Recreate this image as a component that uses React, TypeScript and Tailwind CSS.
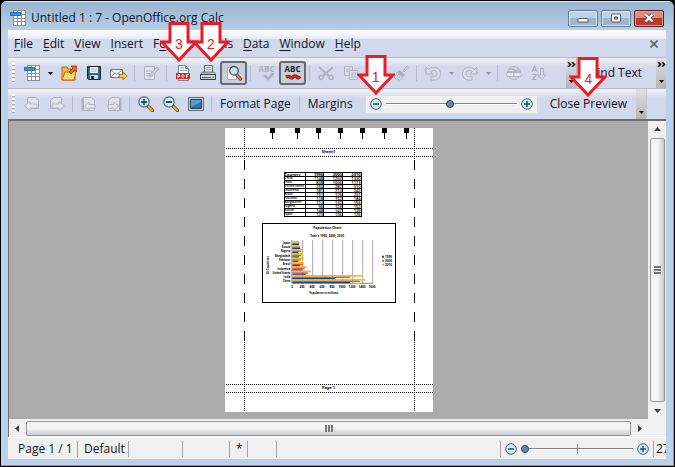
import { useState } from 'react';
import type { ReactNode } from 'react';
import clsx from 'clsx';

const menus = ['File', 'Edit', 'View', 'Insert', 'Format', 'Tools', 'Data', 'Window', 'Help'];

const columnTabs = [47, 72, 93, 115, 137, 159, 181];

const countries = [
  { name: 'China', values: [1148, 1263, 1330] },
  { name: 'India', values: [838, 1006, 1173] },
  { name: 'United States', values: [250, 282, 310] },
  { name: 'Indonesia', values: [181, 213, 242] },
  { name: 'Brazil', values: [151, 176, 201] },
  { name: 'Pakistan', values: [118, 152, 184] },
  { name: 'Bangladesh', values: [112, 132, 156] },
  { name: 'Nigeria', values: [96, 123, 152] },
  { name: 'Russia', values: [148, 147, 139] },
  { name: 'Japan', values: [123, 126, 126] },
];

// bar lengths for 2010, 2000 and 1990, listed from the top of the chart
const bars = [
  { name: 'Japan', y: 55, w: [22, 21, 20] },
  { name: 'Russia', y: 67, w: [23, 23, 24] },
  { name: 'Nigeria', y: 79, w: [33, 27, 17] },
  { name: 'Bangladesh', y: 92, w: [31, 27, 20] },
  { name: 'Pakistan', y: 105, w: [35, 25, 18] },
  { name: 'Brazil', y: 118, w: [35, 32, 23] },
  { name: 'Indonesia', y: 131, w: [43, 37, 29] },
  { name: 'United States', y: 144, w: [56, 47, 40] },
  { name: 'India', y: 157, w: [212, 173, 128] },
  { name: 'China', y: 169, w: [220, 203, 173] },
];

/* ---------- Icons ---------- */

function Icon({ children, className = 'size-4' }: { children: ReactNode; className?: string }) {
  return (
    <svg viewBox="0 0 16 16" className={clsx('shrink-0', className)} fill="none" aria-hidden="true">
      {children}
    </svg>
  );
}

function SheetIcon({ className }: { className?: string }) {
  return (
    <Icon className={className}>
      <path d="M3 0h13v16H3z" fill="#8a9098" />
      <path
        d="M4 1h3v3H4zM8 1h3v3H8zM12 1h3v3h-3zM4 5h3v3H4zM8 5h3v3H8zM12 5h3v3h-3zM4 9h3v2H4zM8 9h3v2H8zM12 9h3v2h-3zM4 12h3v3H4zM8 12h3v3H8zM12 12h3v3h-3z"
        fill="#fff"
      />
      <path d="M.5 2.5h10v3H.5z" fill="#2f9ae0" stroke="#1671b5" />
    </Icon>
  );
}

function OpenIcon() {
  return (
    <Icon>
      <path d="M1 15V2h5l1 2h3v4h4v7z" fill="#f6b93b" stroke="#a9660c" />
      <path d="M1 15l3-8h4l1-1h6l-2 9z" fill="#ffdb6e" stroke="#b5700d" />
      <path d="M8 7l4-4-2-2h6v6l-2-2-4 4z" fill="#ea6a24" stroke="#8f2f0c" strokeWidth=".8" />
    </Icon>
  );
}

function SaveIcon() {
  return (
    <Icon>
      <path d="M1.5 1.5h13v13h-12l-1-1z" fill="#3b6286" stroke="#15273a" />
      <path d="M4 2h8v6H4z" fill="#eef5fb" />
      <path d="M5 4h6M5 6h6" stroke="#a5bccf" />
      <path d="M4 10h8v4H4z" fill="#c9d4de" />
      <path d="M5 11h3v3H5z" fill="#1b2e42" />
    </Icon>
  );
}

function MailIcon() {
  return (
    <Icon className="h-4 w-[18px]">
      <path d="M-.5 4.500h12v8h-12z" fill="#f4f6f9" stroke="#6f7882" />
      <path d="M0 5l5.500 4.500L11 5M0 12l4-4M11 12L7 8" stroke="#929aa3" />
      <path d="M8 9.500h4V7l4 4-4 4v-2.500H8z" fill="#ffc94a" stroke="#a5640a" strokeWidth=".9" />
    </Icon>
  );
}

function EditIcon() {
  return (
    <Icon className="size-4 text-[#adb3c3]">
      <path d="M1.500 1.500h10v13h-10z" fill="#dfe3ef" stroke="currentColor" />
      <path d="M3 6h6M3 8.500h5M3 11h3" stroke="currentColor" />
      <path d="M6 12l1-3 7-7 2 2-7 7z" fill="#c7ccda" stroke="currentColor" />
    </Icon>
  );
}

function PdfIcon() {
  return (
    <Icon>
      <path d="M3.500.5h7l3 3v12h-10z" fill="#f7f9fb" stroke="#77838f" />
      <path d="M10.500.5v3h3" stroke="#77838f" />
      <path d="M5 3h4M5 5.500h7" stroke="#88a6c0" />
      <path d="M1 8h14v6H1z" fill="#e0241b" />
      <path d="M3 13V9.500h1.500v2H3M7 9.500v3h1.200l.8-.8v-1.400l-.8-.8zM11.500 13V9.500H14M11.500 11.200H13" stroke="#fff" strokeWidth=".9" />
    </Icon>
  );
}

function PrinterIcon() {
  return (
    <Icon>
      <path d="M4.500 8V.5h8V8" fill="#fafdff" stroke="#5b6570" />
      <path d="M6 2.500h5M6 4.500h5" stroke="#6d98c0" />
      <path d="M1 8.500l2-1.500h10.500L15 8.500V10H1z" fill="#c3c8cd" stroke="#50575e" />
      <path d="M.5 9.500h15v5H.5z" fill="#d3d7da" stroke="#363c43" />
      <path d="M2 12.500h9" stroke="#50575e" />
      <path d="M12 12.500h2" stroke="#35b81f" strokeWidth="1.500" />
    </Icon>
  );
}

function PreviewIcon() {
  return (
    <Icon>
      <path d="M1.500 2.500h9v12h-9z" fill="#fff" stroke="#a3abb5" />
      <path d="M10.500 9.500l4 4.500" stroke="#5c3a12" strokeWidth="3.200" strokeLinecap="round" />
      <path d="M10.800 9.800l3.500 4" stroke="#e9a13a" strokeWidth="1.600" strokeLinecap="round" />
      <circle cx="8" cy="5.800" r="4.300" fill="#c6e2f5" stroke="#44525f" strokeWidth="1.300" />
      <path d="M5.500 5.500C5.800 4 7 3.300 8.500 3.300" stroke="#fff" />
    </Icon>
  );
}

function SpellIcon({ active }: { active?: boolean }) {
  return (
    <span
      className={clsx(
        'flex flex-col items-center text-[8px] leading-[8px] font-bold',
        active ? 'text-[#18222d]' : 'text-[#a9afbf]'
      )}
    >
      ABC
      <svg viewBox="0 0 16 8" className="h-2 w-4" fill="none" aria-hidden="true">
        {active ? (
          <>
            <path d="M1 4c2-1 3-1 4 0s2 1.500 3 0 3-1.500 4 0 2 1 3-.5" stroke="#7d120b" strokeWidth="3.200" />
            <path d="M1 4c2-1 3-1 4 0s2 1.500 3 0 3-1.500 4 0 2 1 3-.5" stroke="#e8281b" strokeWidth="2" />
          </>
        ) : (
          <path d="M5 2l4 4 6-6" stroke="currentColor" strokeWidth="2.400" />
        )}
      </svg>
    </span>
  );
}

function CutIcon() {
  return (
    <Icon className="size-4 text-[#adb3c3]">
      <path d="M1 2l10 9M15 2L5 11" stroke="currentColor" strokeWidth="2" />
      <circle cx="3" cy="12.500" r="2" stroke="currentColor" strokeWidth="1.600" />
      <circle cx="13" cy="12.500" r="2" stroke="currentColor" strokeWidth="1.600" />
    </Icon>
  );
}

function CopyIcon() {
  return (
    <Icon className="size-4 text-[#adb3c3]">
      <path d="M1.500 1.500h8v9h-8z" fill="#dce0ed" stroke="currentColor" />
      <path d="M6.500 5.500h8v9h-8z" fill="#dce0ed" stroke="currentColor" />
      <path d="M3 4h5M3 6h3M8 8h5M8 10h5M8 12h5" stroke="currentColor" />
    </Icon>
  );
}

function PasteIcon() {
  return (
    <Icon className="size-4 text-[#adb3c3]">
      <path d="M2.500 2.500h11v12h-11z" fill="#dce0ed" stroke="currentColor" />
      <path d="M5 1h6v3H5z" fill="currentColor" />
    </Icon>
  );
}

function BrushIcon() {
  return (
    <Icon className="size-4 text-[#a9afbf]">
      <path d="M10 6l4-5 1.500 1.500L11 7z" fill="#d5dae8" stroke="currentColor" />
      <path d="M6 5l6 5-1.500 2-6-5z" fill="currentColor" />
      <path d="M4 7l6 5c-1 2-3 3-5 3 0-1-1-1-2-1-1-1-1-1-2-2 2-1 2-3 3-5z" fill="#d5dae8" stroke="currentColor" />
      <path d="M4 12l2-3M6 13l1-2" stroke="currentColor" />
    </Icon>
  );
}

function UndoIcon({ flip }: { flip?: boolean }) {
  return (
    <Icon className={clsx('size-4 text-[#a9afbf]', flip && '-scale-x-100')}>
      <path
        d="M1 2v7h7L5.500 6.500C8 4.500 12 5 12 8.500S9 12 6 11.500V15c5 1 9.500-1 9.500-6.500C15.500 2 8 .5 3.500 4.500z"
        fill="#d9deeb"
        stroke="currentColor"
      />
    </Icon>
  );
}

function GlobeIcon() {
  return (
    <Icon className="size-4 text-[#adb3c3]">
      <circle cx="8" cy="8" r="6.500" fill="#cfd4e2" stroke="currentColor" />
      <path d="M3 4c2 1 4-1 5 1s3 0 5-1M2 7h12" stroke="currentColor" strokeWidth="1.300" />
      <rect x=".5" y="7.500" width="8" height="4" rx="2" fill="#e2e6f0" stroke="currentColor" />
      <rect x="7.500" y="7.500" width="8" height="4" rx="2" fill="#e2e6f0" stroke="currentColor" />
    </Icon>
  );
}

function SortIcon() {
  return (
    <Icon className="size-4 text-[#a9afbf]">
      <path d="M1 7l2.500-6L6 7M2 5h3M1.500 9.500h4l-4 5h4" stroke="currentColor" strokeWidth="1.200" />
      <path d="M9.500 3.500h3V10h2.500l-4 4.500L7 10h2.500z" fill="#d5dae8" stroke="currentColor" />
    </Icon>
  );
}

function PageArrowIcon({ flip, edge }: { flip?: boolean; edge?: boolean }) {
  return (
    <Icon className={clsx('size-4 text-[#adb2c2]', flip && '-scale-x-100')}>
      <path d={edge ? 'M2.500 1.500h8l3 3v10h-11z' : 'M3.500 1.500h8l3 3v8h-11z'} fill="#dfe3ef" stroke="currentColor" />
      {edge && <path d="M1.500 2v13" stroke="currentColor" strokeWidth="2" />}
      <path
        d={edge ? 'M3.500 10L8 6v2.500h6v3.500H8v2.500z' : 'M.5 10L6 5.500V8h7v4H6v2.500z'}
        fill="#e5e8f2"
        stroke="currentColor"
      />
    </Icon>
  );
}

function MagnifierIcon({ plus }: { plus?: boolean }) {
  return (
    <Icon>
      <path d="M10.500 10.500l4 4" stroke="#7b4a11" strokeWidth="3.200" strokeLinecap="round" />
      <path d="M10.800 10.800l3.500 3.500" stroke="#f2b23f" strokeWidth="1.800" strokeLinecap="round" />
      <circle cx="6" cy="6" r="5.200" fill="#d5ecfb" stroke="#51626f" strokeWidth="1.200" />
      <path d={plus ? 'M3 6h6M6 3v6' : 'M3 6h6'} stroke="#12548f" strokeWidth="1.800" />
    </Icon>
  );
}

function ScreenIcon() {
  return (
    <Icon>
      <path d="M.5 1.500h15v13H.5z" fill="#d4d6d6" stroke="#62686e" />
      <path d="M2.500 3.500h11v9h-11z" fill="#2f74ad" stroke="#123e66" />
      <path d="M3 4h10v2L3 11z" fill="#5b9bce" />
    </Icon>
  );
}

function RoundIcon({ plus }: { plus?: boolean }) {
  return (
    <svg viewBox="0 0 12 12" className="size-3 shrink-0" fill="none" aria-hidden="true">
      <circle cx="6" cy="6" r="5.300" fill="#d8ebf8" stroke="#46617c" />
      <path d={plus ? 'M3 6h6M6 3v6' : 'M3 6h6'} stroke="#15528c" strokeWidth="1.500" />
    </svg>
  );
}

function Caret({ className = 'text-black' }: { className?: string }) {
  return (
    <svg viewBox="0 0 5 3" className={clsx('h-[3px] w-[5px]', className)} aria-hidden="true">
      <path d="M0 0h5L2.500 3z" fill="currentColor" />
    </svg>
  );
}

/* ---------- Toolbar parts ---------- */

// One or more numbered arrows that point down at the control they sit in
function Callouts({ labels }: { labels: string[] }) {
  return (
    <span className="pointer-events-none absolute bottom-full left-1/2 z-10 -mb-px flex -translate-x-1/2 -space-x-1.5">
      {labels.map((label) => (
        <span
          key={label}
          className="relative flex h-10 w-[38px] items-center justify-center pt-1 font-['Liberation_Sans',sans-serif] text-sm text-[#ed1c24]"
        >
          <svg viewBox="0 0 38 40" className="absolute inset-0 size-full" aria-hidden="true">
            <path d="M10 1.500h18v18.500h8L19 38 2 20h8z" fill="#fff" stroke="#ed1c24" strokeWidth="3" />
          </svg>
          <span className="relative">{label}</span>
        </span>
      ))}
    </span>
  );
}

function Tool({ label, pressed, children }: { label: string; pressed?: boolean; children: ReactNode }) {
  return (
    <button
      aria-label={label}
      title={label}
      className={clsx(
        'flex h-6 shrink-0 items-center justify-center',
        pressed ? 'w-[27px] rounded-[3px] border-2 border-[#656b76] bg-[#c9cedb]' : 'w-[25px]'
      )}
    >
      {children}
    </button>
  );
}

function Drop({ label, className }: { label: string; className?: string }) {
  return (
    <button aria-label={label} className="flex h-6 w-3 shrink-0 items-center justify-center">
      <Caret className={className} />
    </button>
  );
}

function Separator() {
  return <span className="mx-[3px] h-4 w-px shrink-0 bg-[#b9bcc6]" />;
}

function Grip() {
  return (
    <span className="mx-1 h-5 w-[3px] shrink-0 bg-[repeating-linear-gradient(to_bottom,#fff_0px,#fff_2px,#a7adbd_2px,#a7adbd_3px,transparent_3px,transparent_4px)]" />
  );
}

function Overflow({ arrows }: { arrows?: boolean }) {
  return (
    <button
      aria-label="More controls"
      className="flex h-full w-2.5 shrink-0 flex-col items-center justify-between bg-linear-to-b from-[#dfe1e6] to-[#b4b5b8] pt-1 pb-[5px]"
    >
      {arrows ? (
        <svg viewBox="0 0 9 5" className="h-[5px] w-[9px]" fill="none" aria-hidden="true">
          <path d="M1 0l2.500 2.500L1 5M5 0l2.500 2.500L5 5" stroke="#000" strokeWidth="1.500" />
        </svg>
      ) : (
        <span />
      )}
      <Caret />
    </button>
  );
}

const rangeClass =
  'min-w-0 appearance-none bg-transparent ' +
  '[&::-webkit-slider-runnable-track]:h-0.5 [&::-webkit-slider-runnable-track]:border-b [&::-webkit-slider-runnable-track]:border-white [&::-webkit-slider-runnable-track]:bg-[#858585] ' +
  '[&::-webkit-slider-thumb]:-mt-[3px] [&::-webkit-slider-thumb]:size-2 [&::-webkit-slider-thumb]:appearance-none [&::-webkit-slider-thumb]:rounded-full [&::-webkit-slider-thumb]:border [&::-webkit-slider-thumb]:border-[#2b4357] [&::-webkit-slider-thumb]:bg-[#5f8cab]';

/* ---------- Print preview ---------- */

function PopulationChart() {
  return (
    <svg viewBox="0 0 402 240" className="mx-auto mt-1.5 h-20 w-[134px] text-[10px]" role="img" aria-label="Population Chart">
      <rect x="1.500" y="1.500" width="399" height="237" fill="#fff" stroke="#000" strokeWidth="3" />
      <text x="196" y="18" textAnchor="middle" fontSize="10" fontWeight="bold">Population Chart</text>
      <text x="195" y="43" textAnchor="middle" fontWeight="bold" fontSize="9">Year&apos;s 1990, 2000, 2010</text>
      {[122, 152, 182, 212, 242, 272, 302, 332].map((x) => (
        <path key={x} d={`M${x} 51v130`} stroke="#a9a9a9" strokeWidth="3" />
      ))}
      <path d="M89.500 51v130h243" fill="none" stroke="#8a8a8a" strokeWidth="3" />
      {bars.map((bar) => (
        <g key={bar.name}>
          <text x="85" y={bar.y + 9} textAnchor="end" fontWeight="bold" fontSize="8">{bar.name}</text>
          <rect x="91" y={bar.y - 1} width={bar.w[0] - 2} height="1.500" fill="#8d7a55" />
          <rect x="91" y={bar.y} width={bar.w[0]} height="4" fill="#f5c211" />
          <rect x="91" y={bar.y + 4} width={bar.w[1]} height="4" fill="#f2511b" />
          <rect x="91" y={bar.y + 8} width={bar.w[2]} height="3.500" fill="#0c4a86" />
        </g>
      ))}
      {[0, 200, 400, 600, 800, 1000, 1200, 1400, 1600].map((tick, i) => (
        <text key={tick} x={90 + i * 30} y="196" textAnchor="middle" fontWeight="bold" fontSize="9">{tick}</text>
      ))}
      <text x="185" y="214" textAnchor="middle" fontWeight="bold" fontSize="8">Population in millions</text>
      <text transform="translate(21 127) rotate(-90)" textAnchor="middle" fontWeight="bold" fontSize="9">10 Countries</text>
      <path d="M360 98h6v6h-6z" fill="#0c4a86" />
      <path d="M360 110h6v6h-6z" fill="#f2511b" />
      <path d="M360 122h6v6h-6z" fill="#f5c211" />
      <text x="369" y="104" fontWeight="bold" fontSize="9">1990</text>
      <text x="369" y="116" fontWeight="bold" fontSize="9">2000</text>
      <text x="369" y="128" fontWeight="bold" fontSize="9">2010</text>
    </svg>
  );
}

function MarginGuides() {
  return (
    <svg viewBox="0 0 208 284" className="absolute inset-0 size-full" fill="none" stroke="#000" aria-hidden="true">
      {columnTabs.map((x) => (
        <g key={x}>
          <path d={`M${x - 2} 0h5v5h-5z`} fill="#000" stroke="none" />
          <path d={`M${x + 0.5} 5v6`} />
        </g>
      ))}
      <path d="M1 20.500h207M1 28.500h207M1 256.500h207M1 264.500h207" strokeDasharray="1 1" />
      {[19.5, 189.5].map((x) => (
        <g key={x}>
          <path d={`M${x} 0v32M${x} 214v70`} strokeDasharray="1 1" />
          <path d={`M${x} 32v182`} strokeDasharray="10 9" />
        </g>
      ))}
    </svg>
  );
}

function SheetPage() {
  return (
    <article className="relative flex h-[284px] w-52 flex-col bg-white pt-5 text-center text-[4px] leading-[3px] text-black">
      <MarginGuides />
      <p className="text-[4px] leading-2 font-bold">Sheet1</p>
      <table className="mt-4 ml-[59px] w-[78px] table-fixed border-collapse text-right font-semibold">
        <thead>
          <tr>
            <th className="w-[21px] border border-black p-0 text-left">Country</th>
            <th className="border border-black p-0">1990</th>
            <th className="border border-black p-0">2000</th>
            <th className="border border-black p-0">2010</th>
          </tr>
        </thead>
        <tbody>
          {countries.map((country) => (
            <tr key={country.name}>
              <td className="border border-black p-0 text-left text-[3px] whitespace-nowrap">{country.name}</td>
              {country.values.map((value, i) => (
                <td key={i} className="border border-black p-0">{value}</td>
              ))}
            </tr>
          ))}
        </tbody>
      </table>
      <PopulationChart />
      <p className="mt-auto mb-5 text-[4px] leading-2 font-bold">Page 1</p>
    </article>
  );
}

function ScrollArrow({ label, path }: { label: string; path: string }) {
  return (
    <button aria-label={label} className="flex size-[17px] shrink-0 items-center justify-center bg-[#f0f0f0]">
      <svg viewBox="0 0 7 7" className="size-[7px]" fill="#404040" aria-hidden="true">
        <path d={path} />
      </svg>
    </button>
  );
}

/* ---------- App ---------- */

function StatusCell({ className, children }: { className: string; children?: ReactNode }) {
  return (
    <span className={clsx('flex h-4 shrink-0 items-center border-r border-[#a5a5a5] pl-1.5', className)}>
      {children}
    </span>
  );
}

export default function App() {
  const [previewZoom, setPreviewZoom] = useState(49);
  const [viewZoom, setViewZoom] = useState(0);

  return (
    <div className="h-screen bg-black p-px font-['Open_Sans',sans-serif] text-xs text-[#10131c]">
      <div className="flex h-full flex-col overflow-hidden rounded-t-md border-r border-b border-[#27c3da] bg-[#b9d1ea] px-[7px] pb-1.5">
        {/* Title bar */}
        <header className="-mx-[7px] flex h-[29px] shrink-0 items-center gap-[5px] border-t border-[#dbe8f5] bg-linear-to-b from-[#98b3d0] to-[#b9cfe9] px-[9px] pt-1">
          <SheetIcon />
          <h1 className="flex-1 truncate">Untitled 1 : 7 - OpenOffice.org Calc</h1>
          <div className="flex gap-[3px]">
            <button aria-label="Minimize" className="flex h-[17px] w-[30px] items-center justify-center rounded-xs border border-[#64788f] bg-linear-to-b from-[#c0d2e6] from-50% to-[#9db6d0] to-50% shadow-[inset_0_0_0_1px_#dbe7f3]">
              <svg viewBox="0 0 12 10" className="h-2.5 w-3" aria-hidden="true">
                <rect x="1" y="5.500" width="10" height="3.500" rx=".5" fill="#fff" stroke="#535a66" />
              </svg>
            </button>
            <button aria-label="Maximize" className="flex h-[17px] w-[30px] items-center justify-center rounded-xs border border-[#64788f] bg-linear-to-b from-[#c0d2e6] from-50% to-[#9db6d0] to-50% shadow-[inset_0_0_0_1px_#dbe7f3]">
              <svg viewBox="0 0 12 10" className="h-2.5 w-3" aria-hidden="true">
                <rect x="1.500" y="1" width="9" height="8" rx=".5" fill="#fff" stroke="#535a66" />
                <path d="M4.500 4h3v2h-3z" fill="#8fa9c4" stroke="#535a66" />
              </svg>
            </button>
            <button aria-label="Close" className="flex h-[17px] w-[30px] items-center justify-center rounded-xs border border-[#5a1d1a] bg-linear-to-b from-[#d98d80] from-50% to-[#b93a28] to-50% shadow-[inset_0_0_0_1px_#e3a398]">
              <svg viewBox="0 0 12 10" className="h-2.5 w-3" fill="none" aria-hidden="true">
                <path d="M2.500 1.500l7 7M9.500 1.500l-7 7" stroke="#535a66" strokeWidth="4" />
                <path d="M2.500 1.500l7 7M9.500 1.500l-7 7" stroke="#fff" strokeWidth="2.300" />
              </svg>
            </button>
          </div>
        </header>

        {/* Menu bar */}
        <nav className="flex h-[27px] shrink-0 items-center justify-between bg-[linear-gradient(to_bottom,#fff,#e6ebf4_9px,#d3d9ec_9px)] pr-2 pl-px">
          <div className="flex items-center">
            {menus.map((menu) => (
              <button key={menu} className="px-[5px]">
                {menu === 'Format' ? 'F' : ''}
                <span className="underline underline-offset-2">{menu === 'Format' ? 'o' : menu[0]}</span>
                {menu === 'Format' ? 'rmat' : menu.slice(1)}
              </button>
            ))}
          </div>
          <button aria-label="Close document">
            <svg viewBox="0 0 8 8" className="size-2" fill="none" aria-hidden="true">
              <path d="M.5.5l7 7M7.500.5l-7 7" stroke="#60656f" strokeWidth="1.800" />
            </svg>
          </button>
        </nav>

        {/* Standard toolbar */}
        <div className="flex h-[31px] shrink-0 items-center border-t border-[#b9bbc4] bg-linear-to-b from-[#f1f3fa] to-[#d3d9ec] to-30%">
          <Grip />
          <Tool label="New"><SheetIcon /></Tool>
          <Drop label="New document type" />
          <Tool label="Open"><OpenIcon /></Tool>
          <Tool label="Save"><SaveIcon /></Tool>
          <Tool label="Document as E-mail"><MailIcon /></Tool>
          <Separator />
          <Tool label="Edit File"><EditIcon /></Tool>
          <Separator />
          <div className="relative flex shrink-0">
            <Tool label="Export Directly as PDF"><PdfIcon /></Tool>
            <Tool label="Print File Directly"><PrinterIcon /></Tool>
            <Callouts labels={['3', '2']} />
          </div>
          <Tool label="Page Preview" pressed><PreviewIcon /></Tool>
          <Separator />
          <Tool label="Spellcheck"><SpellIcon /></Tool>
          <Tool label="AutoSpellcheck" pressed><SpellIcon active /></Tool>
          <Separator />
          <Tool label="Cut"><CutIcon /></Tool>
          <Tool label="Copy"><CopyIcon /></Tool>
          <Tool label="Paste"><PasteIcon /></Tool>
          <Tool label="Format Paintbrush"><BrushIcon /></Tool>
          <Separator />
          <Tool label="Undo"><UndoIcon /></Tool>
          <Drop label="Undo history" className="text-[#8e94a3]" />
          <Tool label="Redo"><UndoIcon flip /></Tool>
          <Drop label="Redo history" className="text-[#8e94a3]" />
          <Separator />
          <Tool label="Hyperlink"><GlobeIcon /></Tool>
          <Tool label="Sort"><SortIcon /></Tool>
          <span className="flex-1" />
          <Overflow arrows />
          <div className="flex h-full w-[90px] shrink-0 items-center justify-between border-l border-[#b9bbc4]">
            <button className="flex-1 pr-3.5 text-right">Find Text</button>
            <Overflow arrows />
          </div>
        </div>

        {/* Preview toolbar */}
        <div className="flex h-[31px] shrink-0 items-center border-t border-[#b9bbc4] bg-linear-to-b from-[#f1f3fa] to-[#d3d9ec] to-30%">
          <Grip />
          <Tool label="Previous Page"><PageArrowIcon /></Tool>
          <Tool label="Next Page"><PageArrowIcon flip /></Tool>
          <Separator />
          <Tool label="First Page"><PageArrowIcon edge /></Tool>
          <Tool label="Last Page"><PageArrowIcon edge flip /></Tool>
          <Separator />
          <Tool label="Zoom In"><MagnifierIcon plus /></Tool>
          <Tool label="Zoom Out"><MagnifierIcon /></Tool>
          <Tool label="Full Screen"><ScreenIcon /></Tool>
          <Separator />
          <button className="px-[5px] whitespace-nowrap">Format Page</button>
          <Separator />
          <button className="px-[5px]">Margins</button>
          <div className="ml-2 flex h-[17px] w-[171px] shrink-0 items-center gap-1 bg-[#f0f0f0] px-1">
            <button aria-label="Decrease scale" className="relative flex h-5 items-center">
              <RoundIcon />
              <Callouts labels={['1']} />
            </button>
            <input
              type="range"
              aria-label="Scaling factor"
              value={previewZoom}
              onChange={(e) => setPreviewZoom(Number(e.target.value))}
              className={clsx(rangeClass, 'flex-1')}
            />
            <button aria-label="Increase scale"><RoundIcon plus /></button>
          </div>
          <button className="relative ml-2 px-[5px] whitespace-nowrap">
            Close Preview
            <Callouts labels={['4']} />
          </button>
          <span className="flex-1" />
          <Overflow />
          <span className="h-full w-5 shrink-0 border-l border-[#c4c6ce]" />
        </div>

        {/* Preview area with scrollbars */}
        <main className="flex min-h-0 flex-1 bg-[#f0f0f0]">
          <div className="flex min-w-0 flex-1 flex-col">
            <div className="flex flex-1 items-center justify-center border-t-2 border-l border-[#6d6d6d] bg-[#ababab]">
              <SheetPage />
            </div>
            <div className="flex h-[18px] shrink-0 items-center border-l border-[#6d6d6d]">
              <ScrollArrow label="Scroll left" path="M5 0v7L1 3.500z" />
              <div className="flex h-[15px] flex-1 items-center justify-center gap-px rounded-xs border border-[#979797] bg-linear-to-b from-[#f4f4f4] from-50% to-[#c9cacc]">
                <span className="h-[7px] w-0.5 bg-[#777]" />
                <span className="h-[7px] w-0.5 bg-[#777]" />
                <span className="h-[7px] w-0.5 bg-[#777]" />
              </div>
              <ScrollArrow label="Scroll right" path="M2 0v7l4-3.500z" />
            </div>
          </div>
          <div className="flex w-[18px] flex-col items-center border-t-2 border-[#6d6d6d] pb-[18px]">
            <ScrollArrow label="Scroll up" path="M0 5h7L3.500 1z" />
            <div className="flex w-[15px] flex-1 flex-col items-center justify-center gap-px rounded-xs border border-[#979797] bg-linear-to-r from-[#f4f4f4] from-50% to-[#c9cacc]">
              <span className="h-0.5 w-[7px] bg-[#777]" />
              <span className="h-0.5 w-[7px] bg-[#777]" />
              <span className="h-0.5 w-[7px] bg-[#777]" />
            </div>
            <ScrollArrow label="Scroll down" path="M0 2h7L3.500 6z" />
          </div>
        </main>

        {/* Status bar */}
        <footer className="flex h-[22px] shrink-0 items-center overflow-hidden border-t border-white bg-[#f0f0f0] pl-1">
          <StatusCell className="w-[66px]">Page 1 / 1</StatusCell>
          <StatusCell className="w-[51px]">Default</StatusCell>
          <StatusCell className="w-[54px]" />
          <StatusCell className="w-[47px]" />
          <StatusCell className="w-[18px]">*</StatusCell>
          <StatusCell className="w-[29px]" />
          <StatusCell className="flex-1" />
          <div className="flex h-4 w-[153px] shrink-0 items-center gap-1 border-r border-[#a5a5a5] px-1">
            <button aria-label="Zoom out"><RoundIcon /></button>
            <div className="relative flex flex-1 items-center">
              <span className="absolute left-1/2 h-2.5 w-px bg-[#858585]" />
              <input
                type="range"
                aria-label="Zoom"
                value={viewZoom}
                onChange={(e) => setViewZoom(Number(e.target.value))}
                className={clsx(rangeClass, 'w-full')}
              />
            </div>
            <button aria-label="Zoom in"><RoundIcon plus /></button>
          </div>
          <span className="w-3 shrink-0 overflow-hidden pl-0.5 whitespace-nowrap">27%</span>
        </footer>
      </div>
    </div>
  );
}
